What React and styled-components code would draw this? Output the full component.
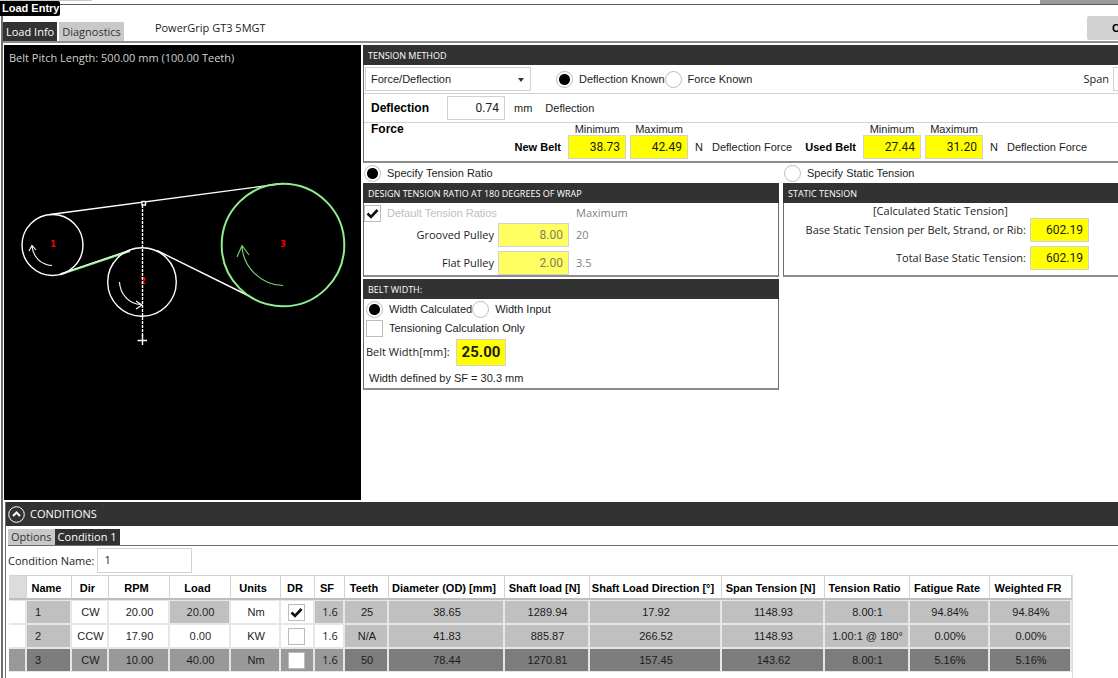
import React from "react";
import styled, { createGlobalStyle, css } from "styled-components";

const ui = '"Open Sans", "Noto Sans", sans-serif';
const arial = '"Liberation Sans", Arial, sans-serif';
const roboto = 'Roboto, "Liberation Sans", sans-serif';
const dark = "#323232";

const Global = createGlobalStyle`
  *, *::before, *::after { box-sizing: border-box; }
  html, body { margin: 0; }
  body { background: #fff; color: #1c1c1c; font: 11px/16px ${arial}; overflow: hidden; }
  input, button, select { font: inherit; color: inherit; margin: 0; border-radius: 0; }
  h1, h2 { margin: 0; }
`;

const Page = styled.div`
  position: relative;
  min-height: 100vh;
  padding: 4px 0 0 1px;
  overflow: hidden;
`;
const Frame = styled.main`
  display: flow-root;
  min-height: calc(100vh - 4px);
  border-left: 2px solid #6e6e6e;
  border-top: 1px solid #5a5a5a;
`;
const WindowTitle = styled.h1`
  position: absolute;
  left: 0;
  top: 1px;
  padding: 0 1px 0 2px;
  border-radius: 0 2px 2px 0;
  background: #000;
  color: #fff;
  font: bold 11px/15px ${arial};
`;
const ClippedTab = styled.div`
  position: absolute;
  right: 0;
  top: 0;
  width: 78px;
  height: 4px;
  background: #999;
`;
const TopEdge = styled.div`
  position: absolute;
  left: 0;
  top: 0;
  width: 92px;
  height: 1px;
  background: #c8c8c8;
`;
const TopBar = styled.header`
  display: flex;
  align-items: flex-end;
  height: 38px;
  border-bottom: 2px solid #8c8c8c;
`;
const Tab = styled.button`
  height: ${(p) => (p.$small ? 16 : 19)}px;
  padding: 0 3px;
  margin-right: ${(p) => (p.$small ? 0 : 2)}px;
  border: 0;
  background: ${(p) => (p.$active ? dark : "#c8c8c8")};
  color: ${(p) => (p.$active ? "#fff" : "#333")};
  font: 11px/16px ${ui};
`;
const Product = styled.span`
  margin: 0 0 5px 29px;
  font: 11px/16px ${ui};
`;
const CloseButton = styled.button`
  align-self: flex-start;
  flex: none;
  width: 80px;
  height: 24px;
  margin: 11px -49px 0 auto;
  border: 0;
  border-radius: 2px;
  background: #d2d2d2;
  color: #000;
  font: bold 11px/16px ${arial};
`;
const Work = styled.div`
  display: flex;
  align-items: flex-start;
  gap: 2px;
  padding: 2px 0 0 1px;
`;
const Viewer = styled.section`
  flex: none;
  width: 357px;
  height: 455px;
  background: #000;
  color: #d0d0d0;
  font: 11px/16px ${ui};
`;
const Caption = styled.div`
  padding: 5px 5px 0;
`;
const Drawing = styled.svg`
  display: block;
  width: 357px;
  height: 434px;
`;
const Settings = styled.div`
  flex: 1;
  min-width: 0;
`;
const Panel = styled.section`
  border: 1px solid #6e6e6e;
  border-bottom: 2px solid #8c8c8c;
  border-right-width: ${(p) => (p.$open ? 0 : 1)}px;
  margin-bottom: ${(p) => p.$gap || 0}px;
`;
const PanelTitle = styled.h2`
  height: 20px;
  margin: -1px -1px 0;
  padding: 0 5px;
  background: ${dark};
  color: #fff;
  font: 9px/21px ${ui};
`;
const Row = styled.div`
  display: flex;
  align-items: center;
  height: ${(p) => p.$h}px;
  padding-left: ${(p) => p.$pad || 0}px;
  border-bottom: ${(p) => (p.$line ? "1px solid #d2d2d2" : "0")};
`;
const SelectBox = styled.span`
  position: relative;
  display: flex;
  width: 166px;
  margin-right: 25px;
  &::after {
    content: "";
    position: absolute;
    right: 7px;
    top: 11px;
    border: 3px solid transparent;
    border-top: 4px solid #333;
    border-bottom: 0;
  }
`;
const Select = styled.select`
  appearance: none;
  width: 100%;
  height: 24px;
  padding: 0 5px;
  border: 1px solid #d2d2d2;
  background: #fff;
`;
const Choice = styled.label`
  display: inline-flex;
  align-items: center;
  gap: 6px;
  white-space: nowrap;
  color: ${(p) => (p.$muted ? "#bebebe" : "inherit")};
`;
const Radio = styled.input.attrs({ type: "radio" })`
  appearance: none;
  flex: none;
  width: 17px;
  height: 17px;
  border: 1px solid #bcbcbc;
  border-radius: 50%;
  background: #fff;
  &:checked { background: radial-gradient(circle, #000 0 5px, #fff 6px); }
`;
const CheckWrap = styled.span`
  position: relative;
  display: inline-flex;
  vertical-align: middle;
  svg { position: absolute; inset: 0; width: 100%; height: 100%; pointer-events: none; }
`;
const CheckInput = styled.input.attrs({ type: "checkbox" })`
  appearance: none;
  width: 17px;
  height: 17px;
  border: 1px solid #bcbcbc;
  background: #fff;
`;
const Value = styled.input`
  grid-row: ${(p) => p.$row || "auto"};
  grid-column: ${(p) => p.$col || "auto"};
  width: ${(p) => p.$w || 58}px;
  height: ${(p) => p.$h || 24}px;
  padding: 0 5px;
  border: 1px solid #d2d2d2;
  background: ${(p) => (p.$plain ? "#fff" : p.$muted ? "#ffff62" : "#ff0")};
  text-align: right;
  font: 12px/16px ${roboto};
  && { color: ${(p) => (p.$muted ? "#808060" : "#1c1c1c")}; }
  ${(p) => p.$big && css`
    padding: 0;
    text-align: center;
    font: bold 15px/20px ${roboto};
  `}
`;
const Strong = styled.label`
  color: #000;
  font: bold ${(p) => p.$size || 11}px/16px ${arial};
`;
const DeflectionLabel = styled(Strong)`width: 76px;`;
const Unit = styled.span`margin-left: 9px;`;
const UnitNote = styled.span`margin-left: 13px;`;
const SpanField = styled.label`
  display: flex;
  align-items: center;
  gap: 4px;
  margin: 0 -53px 0 auto;
  font: 11px/16px ${ui};
`;
const Force = styled.div`
  display: grid;
  grid-template-columns: 139px 50px 58px 58px 108px 55px 58px 58px auto;
  grid-template-rows: 12px 24px;
  column-gap: 4px;
  align-items: center;
  justify-content: start;
  padding: 0 0 2px 7px;
  white-space: nowrap;
`;
const ForceTitle = styled.span`
  grid-row: 1;
  grid-column: ${(p) => p.$col};
  text-align: ${(p) => (p.$col === 1 ? "left" : "center")};
  color: ${(p) => (p.$col === 1 ? "#000" : "inherit")};
  font: ${(p) => (p.$col === 1 ? "bold 12px/16px " : "11px/12px ")} ${arial};
`;
const ForceLabel = styled(Strong)`
  grid-row: 2;
  grid-column: ${(p) => p.$col};
  text-align: right;
  padding-right: 3px;
`;
const ForceUnit = styled.span`
  grid-row: 2;
  grid-column: ${(p) => p.$col};
  display: flex;
  gap: 9px;
  padding-left: 3px;
`;
const Modes = styled.div`
  display: grid;
  grid-template-columns: 416px 1fr;
  column-gap: 4px;
`;
const Ratio = styled.div`
  display: grid;
  grid-template-columns: 130px 71px auto;
  grid-template-rows: 20px 24px 4px 24px;
  column-gap: 4px;
  align-items: center;
  justify-content: start;
  height: 72px;
  font: 11px/16px ${ui};
  color: #808080;
`;
const RatioCheck = styled.div`
  grid-column: 1 / 3;
  grid-row: 1;
  display: flex;
  font: 11px/16px ${arial};
`;
const FieldLabel = styled.label`
  grid-row: ${(p) => p.$row};
  grid-column: 1;
  text-align: right;
  color: #1c1c1c;
`;
const Limit = styled.span`
  grid-row: ${(p) => p.$row};
  grid-column: 3;
  padding-left: 3px;
`;
const Static = styled.div`
  display: grid;
  grid-template-columns: 242px 59px;
  grid-template-rows: 15px 24px 4px 24px;
  column-gap: 4px;
  align-items: center;
  height: 72px;
  font: 11px/16px ${ui};
`;
const StaticNote = styled.span`
  grid-column: 1;
  grid-row: 1;
  padding-left: 89px;
  white-space: nowrap;
`;
const WidthPanel = styled.div`max-width: 416px;`;
const WidthLabel = styled.label`
  width: 90px;
  font: 11px/16px ${ui};
`;
const Conditions = styled.section`
  margin: 2px 0 0 2px;
  border-left: 1px solid #6e6e6e;
`;
const ConditionsBar = styled.div`
  display: flex;
  align-items: center;
  gap: 5px;
  height: 24px;
  padding-left: 2px;
  background: ${dark};
  color: #fff;
  h2 { font: 11px/16px ${ui}; }
`;
const Collapse = styled.button`
  display: flex;
  padding: 0;
  border: 0;
  background: none;
`;
const SubTabs = styled.div`
  display: flex;
  margin-left: 2px;
  padding-top: 3px;
  border-bottom: 1px solid #6e6e6e;
`;
const NameRow = styled.div`
  display: flex;
  align-items: center;
  gap: 3px;
  height: 29px;
  padding-left: 2px;
  font: 11px/16px ${ui};
`;
const NameInput = styled.input`
  width: 95px;
  height: 25px;
  padding: 0 6px 2px;
  border: 1px solid #d2d2d2;
`;
const GridArea = styled.div`
  width: 1067px;
  padding: 0 0 8px 3px;
  border-right: 1px solid #dcdcdc;
`;
const Grid = styled.table`
  table-layout: fixed;
  width: 1063px;
  border-spacing: 0;
  border-top: 1px solid #d2d2d2;
  text-align: center;
  white-space: nowrap;
`;
const Head = styled.th`
  height: 24px;
  padding: 1px 5px 0 0;
  border-right: 1px solid #d2d2d2;
  border-bottom: 2px solid #bebebe;
  background: ${(p) => (p.$corner ? "#dcdcdc" : "#fff")};
  color: #000;
  font: bold 11px/16px ${arial};
`;
const fills = { white: "#fff", grey: "#c0c0c0", mid: "#999", deep: "#7d7d7d" };
const Cell = styled.td`
  height: 24px;
  padding: 0 ${(p) => (p.$check ? 4 : 0)}px 0 2px;
  border: 1px solid #e6e6e6;
  border-width: 1px 2px 1px 0;
  background: ${(p) => fills[p.$fill]};
  ${(p) => p.$first && css`text-align: left; padding-left: 8px;`}
  ${(p) => p.$ui && css`font-family: ${ui};`}
`;

function Check({ id, checked, label }) {
  return (
    <CheckWrap>
      <CheckInput id={id} aria-label={label} defaultChecked={checked} />
      {checked && (
        <svg viewBox="0 0 17 17" aria-hidden="true">
          <path d="M3.5 8.5 L7 12 L13.5 5" fill="none" stroke="#111" strokeWidth="2.6" />
        </svg>
      )}
    </CheckWrap>
  );
}

function BeltDrawing() {
  return (
    <Drawing viewBox="4 66 357 434" fill="none" stroke="#fff" strokeWidth="1.4" role="img" aria-label="Belt layout">
      <path d="M50 214.500 L283 183.500 M157 250.500 L249 296" />
      <path d="M60 274.500 L130 251" stroke="#90ee90" strokeWidth="2" />
      <path d="M60 274 L130 250" stroke="#e8ffe8" strokeWidth="1" />
      <circle cx="52.500" cy="245" r="30.500" />
      <circle cx="142" cy="282" r="34.300" />
      <circle cx="283" cy="245" r="61.300" stroke="#90ee90" strokeWidth="2" />
      <g strokeWidth="1.100">
        <path d="M52 265.500 C41 265 33 257 32 246 M29 251 L32 245.500 L36 250" />
        <path d="M119.500 282 C120 294 129 304 141 304.500 M136 301 L142 305 L136 309" />
        <path d="M283 285.500 C262 285 243 268 242 246 M237 257 L242 245.500 L249 255" stroke="#7cd67c" />
      </g>
      <g fill="#f00" stroke="none" fontFamily="DejaVu Sans" fontWeight="bold" fontSize="8" textAnchor="middle">
        <text x="53" y="247">1</text>
        <text x="143" y="284">2</text>
        <text x="283" y="247">3</text>
      </g>
      <path d="M142.500 205 V336" strokeDasharray="3 1" />
      <rect x="142" y="201.500" width="3.500" height="3.500" fill="#000" />
      <path d="M142.500 335 V345 M137.500 340.500 H147" />
    </Drawing>
  );
}

const columns = [
  ["", 18], ["Name", 45], ["Dir", 37], ["RPM", 61], ["Load", 61], ["Units", 50], ["DR", 34], ["SF", 30],
  ["Teeth", 44], ["Diameter (OD) [mm]", 116], ["Shaft load [N]", 85], ["Shaft Load Direction [°]", 132],
  ["Span Tension [N]", 103], ["Tension Ratio", 85], ["Fatigue Rate", 80], ["Weighted FR", 82],
];
const rows = [
  ["1", "CW", "20.00", "20.00", "Nm", true, "1.6", "25", "38.65", "1289.94", "17.92", "1148.93", "8.00:1", "94.84%", "94.84%"],
  ["2", "CCW", "17.90", "0.00", "KW", false, "1.6", "N/A", "41.83", "885.87", "266.52", "1148.93", "1.00:1 @ 180°", "0.00%", "0.00%"],
  ["3", "CW", "10.00", "40.00", "Nm", false, "1.6", "50", "78.44", "1270.81", "157.45", "143.62", "8.00:1", "5.16%", "5.16%"],
];
function fillFor(row, col) {
  const computed = col === 0 || col > 6;
  if (row === 2) return computed ? "deep" : "mid";
  if (computed) return "grey";
  return row === 0 && (col === 3 || col === 6) ? "grey" : "white";
}

export default function App() {
  return (
    <Page>
      <Global />
      <Frame>
        <TopBar>
          <Tab $active>Load Info</Tab>
          <Tab>Diagnostics</Tab>
          <Product>PowerGrip GT3 5MGT</Product>
          <CloseButton>Close</CloseButton>
        </TopBar>
        <Work>
          <Viewer>
            <Caption>Belt Pitch Length: 500.00 mm (100.00 Teeth)</Caption>
            <BeltDrawing />
          </Viewer>
          <Settings>
            <Panel $open>
              <PanelTitle>TENSION METHOD</PanelTitle>
              <Row $h={29} $pad={1} $line>
                <SelectBox>
                  <Select aria-label="Tension method"><option>Force/Deflection</option></Select>
                </SelectBox>
                <Choice><Radio name="known" defaultChecked />Deflection Known</Choice>
                <Choice><Radio name="known" />Force Known</Choice>
                <SpanField>Span<Value $plain /></SpanField>
              </Row>
              <Row $h={29} $pad={7} $line>
                <DeflectionLabel $size={12} htmlFor="deflection">Deflection</DeflectionLabel>
                <Value id="deflection" $plain defaultValue="0.74" />
                <Unit>mm</Unit>
                <UnitNote>Deflection</UnitNote>
              </Row>
              <Force>
                <ForceTitle $col={1}>Force</ForceTitle>
                <ForceTitle $col={3}>Minimum</ForceTitle>
                <ForceTitle $col={4}>Maximum</ForceTitle>
                <ForceTitle $col={7}>Minimum</ForceTitle>
                <ForceTitle $col={8}>Maximum</ForceTitle>
                <ForceLabel $col={2} htmlFor="newMin">New Belt</ForceLabel>
                <Value id="newMin" $row={2} $col={3} defaultValue="38.73" />
                <Value aria-label="New belt maximum" $row={2} $col={4} defaultValue="42.49" />
                <ForceUnit $col={5}><span>N</span><span>Deflection Force</span></ForceUnit>
                <ForceLabel $col={6} htmlFor="usedMin">Used Belt</ForceLabel>
                <Value id="usedMin" $row={2} $col={7} defaultValue="27.44" />
                <Value aria-label="Used belt maximum" $row={2} $col={8} defaultValue="31.20" />
                <ForceUnit $col={9}><span>N</span><span>Deflection Force</span></ForceUnit>
              </Force>
            </Panel>
            <Modes>
              <div>
                <Row $h={20} $pad={1}><Choice><Radio name="mode" defaultChecked />Specify Tension Ratio</Choice></Row>
                <Panel $gap={2}>
                  <PanelTitle>DESIGN TENSION RATIO AT 180 DEGREES OF WRAP</PanelTitle>
                  <Ratio>
                    <RatioCheck>
                      <Choice $muted><Check id="defaults" checked />Default Tension Ratios</Choice>
                    </RatioCheck>
                    <Limit $row={1}>Maximum</Limit>
                    <FieldLabel $row={2} htmlFor="grooved">Grooved Pulley</FieldLabel>
                    <Value id="grooved" $row={2} $col={2} $w={71} $muted defaultValue="8.00" />
                    <Limit $row={2}>20</Limit>
                    <FieldLabel $row={4} htmlFor="flat">Flat Pulley</FieldLabel>
                    <Value id="flat" $row={4} $col={2} $w={71} $muted defaultValue="2.00" />
                    <Limit $row={4}>3.5</Limit>
                  </Ratio>
                </Panel>
              </div>
              <div>
                <Row $h={20} $pad={1}><Choice><Radio name="mode" />Specify Static Tension</Choice></Row>
                <Panel $open>
                  <PanelTitle>STATIC TENSION</PanelTitle>
                  <Static>
                    <StaticNote>[Calculated Static Tension]</StaticNote>
                    <FieldLabel $row={2} htmlFor="base">Base Static Tension per Belt, Strand, or Rib:</FieldLabel>
                    <Value id="base" $row={2} $col={2} $w={59} defaultValue="602.19" />
                    <FieldLabel $row={4} htmlFor="total">Total Base Static Tension:</FieldLabel>
                    <Value id="total" $row={4} $col={2} $w={59} defaultValue="602.19" />
                  </Static>
                </Panel>
              </div>
            </Modes>
            <WidthPanel>
              <Panel>
                <PanelTitle>BELT WIDTH:</PanelTitle>
                <Row $h={20} $pad={2}>
                  <Choice><Radio name="width" defaultChecked />Width Calculated</Choice>
                  <Choice><Radio name="width" />Width Input</Choice>
                </Row>
                <Row $h={18} $pad={2}><Choice><Check id="tensioning" />Tensioning Calculation Only</Choice></Row>
                <Row $h={30} $pad={2}>
                  <WidthLabel htmlFor="beltWidth">Belt Width[mm]:</WidthLabel>
                  <Value id="beltWidth" $big $w={50} $h={27} defaultValue="25.00" />
                </Row>
                <Row $h={21} $pad={5}>Width defined by SF = 30.3 mm</Row>
              </Panel>
            </WidthPanel>
          </Settings>
        </Work>
        <Conditions>
          <ConditionsBar>
            <Collapse aria-label="Collapse conditions">
              <svg width="17" height="17" viewBox="0 0 17 17" fill="none" stroke="#fff">
                <circle cx="8.500" cy="8.500" r="7.800" />
                <path d="M5 10 L8.500 6.500 L12 10" strokeWidth="2" />
              </svg>
            </Collapse>
            <h2>CONDITIONS</h2>
          </ConditionsBar>
          <SubTabs>
            <Tab $small>Options</Tab>
            <Tab $small $active>Condition 1</Tab>
          </SubTabs>
          <NameRow>
            <label htmlFor="conditionName">Condition Name:</label>
            <NameInput id="conditionName" defaultValue="1" />
          </NameRow>
          <GridArea>
            <Grid>
              <colgroup>{columns.map(([name, w]) => <col key={name} width={w} />)}</colgroup>
              <thead>
                <tr>{columns.map(([name]) => <Head key={name} $corner={!name}>{name}</Head>)}</tr>
              </thead>
              <tbody>
                {rows.map((row, r) => (
                  <tr key={row[0]}>
                    <Cell $fill={r === 2 ? "mid" : "white"} />
                    {row.map((value, c) => (
                      <Cell key={c} $fill={fillFor(r, c)} $first={c === 0} $ui={c === 3 || c === 6} $check={c === 5}>
                        {c === 5 ? <Check label={`DR ${row[0]}`} checked={value} /> : value}
                      </Cell>
                    ))}
                  </tr>
                ))}
              </tbody>
            </Grid>
          </GridArea>
        </Conditions>
      </Frame>
      <TopEdge />
      <ClippedTab />
      <WindowTitle>Load Entry</WindowTitle>
    </Page>
  );
}
